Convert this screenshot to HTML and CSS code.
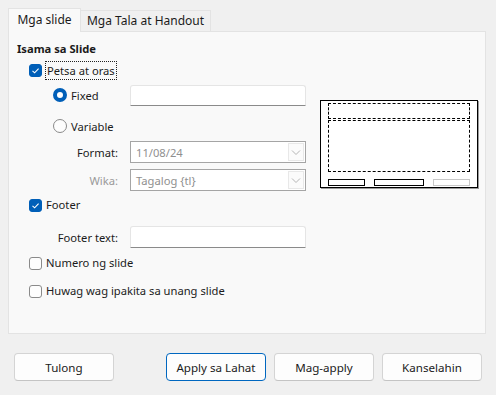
FILE: index.html
```html
<!DOCTYPE html>
<html>
<head>
<meta charset="utf-8">
<link rel="stylesheet" href="styles.css">
</head>
<body>
<div class="dialog">
  <div class="tabs">
    <div class="tab active">Mga slide</div>
    <div class="tab second">Mga Tala at Handout</div>
  </div>
  <div class="panel">
    <div class="heading">Isama sa Slide</div>
    <div class="cols">
      <div class="form">
        <div class="row check-row r-petsa">
          <span class="cb checked"><svg viewBox="0 0 13 13" width="13" height="13"><path d="M3.5 6.8 L5.6 8.8 L9.6 4.6" fill="none" stroke="#fff" stroke-width="1.1"/></svg></span>
          <span class="focus">Petsa at oras</span>
        </div>
        <div class="row field-row r-fixed">
          <span class="radio-label"><span class="rb checked"></span>Fixed</span>
          <span class="input"></span>
        </div>
        <div class="row r-variable">
          <span class="radio-label"><span class="rb"></span>Variable</span>
        </div>
        <div class="row field-row r-format">
          <span class="flabel">Format:</span>
          <span class="input select"><span class="val">11/08/24</span><span class="arrow"><svg viewBox="0 0 16 20" width="16" height="20"><path d="M4 8.5 L8 12.5 L12 8.5" fill="none" stroke="#b5b5b5" stroke-width="1"/></svg></span></span>
        </div>
        <div class="row field-row r-wika">
          <span class="flabel disabled">Wika:</span>
          <span class="input select"><span class="val">Tagalog {tl}</span><span class="arrow"><svg viewBox="0 0 16 20" width="16" height="20"><path d="M4 8.5 L8 12.5 L12 8.5" fill="none" stroke="#b5b5b5" stroke-width="1"/></svg></span></span>
        </div>
        <div class="row check-row r-footer">
          <span class="cb checked"><svg viewBox="0 0 13 13" width="13" height="13"><path d="M3.5 6.8 L5.6 8.8 L9.6 4.6" fill="none" stroke="#fff" stroke-width="1.1"/></svg></span>
          <span class="lbl">Footer</span>
        </div>
        <div class="row field-row r-ftext">
          <span class="flabel">Footer text:</span>
          <span class="input"></span>
        </div>
        <div class="row check-row r-numero">
          <span class="cb"></span>
          <span class="lbl">Numero ng slide</span>
        </div>
        <div class="row check-row r-huwag">
          <span class="cb"></span>
          <span class="lbl">Huwag wag ipakita sa unang slide</span>
        </div>
      </div>
      <div class="preview">
        <div class="pv-title"></div>
        <div class="pv-body"></div>
        <div class="pv-footer">
          <span class="pv-box pv-a"></span>
          <span class="pv-box pv-b"></span>
          <span class="pv-box pv-c"></span>
        </div>
      </div>
    </div>
  </div>
  <div class="buttons">
    <button class="btn">Tulong</button>
    <div class="right-btns">
      <button class="btn default">Apply sa Lahat</button>
      <button class="btn">Mag-apply</button>
      <button class="btn">Kanselahin</button>
    </div>
  </div>
</div>
</body>
</html>
```
FILE: styles.css
```css
html, body {
  margin: 0;
  padding: 0;
}
body {
  width: 496px;
  height: 395px;
  background: #f0f0f0;
  font-family: "Noto Sans", "Open Sans", sans-serif;
  font-size: 11.2px;
  color: #1b1b1b;
  overflow: hidden;
}
.dialog {
  padding: 8px 10px 0 8px;
}
.tabs {
  display: flex;
  align-items: flex-end;
  height: 23px;
  position: relative;
  z-index: 1;
}
.tab {
  white-space: nowrap;
  box-sizing: border-box;
  border: 1px solid #e3e3e3;
  border-bottom: none;
  text-align: center;
}
.tab.active {
  width: 73px;
  height: 24px;
  margin-bottom: -1px;
  background: #f9f9f9;
  line-height: 22px;
  font-size: 12px;
}
.tab.second {
  width: 131px;
  height: 21px;
  margin-left: -1px;
  background: #f0f0f0;
  line-height: 20px;
  font-size: 12px;
}
.panel {
  box-sizing: border-box;
  width: 478px;
  height: 303px;
  background: #f9f9f9;
  border: 1px solid #e3e3e3;
  padding: 9px 8px 0 8px;
}
.heading {
  font-weight: bold;
  height: 16px;
  line-height: 16px;
}
.cols {
  display: grid;
  grid-template-columns: 289px 158px;
  column-gap: 14px;
  align-items: start;
}
.row {
  display: flex;
  align-items: center;
  white-space: nowrap;
}
.check-row {
  height: 18px;
  padding-left: 12px;
}
.field-row {
  height: 22px;
}
.r-petsa { margin-top: 4px; }
.r-fixed { margin-top: 5px; }
.r-variable { margin-top: 11px; height: 18px; }
.r-format { margin-top: 6px; }
.r-wika { margin-top: 6px; }
.r-footer { margin-top: 5px; }
.r-ftext { margin-top: 12px; }
.r-numero { margin-top: 6px; }
.r-huwag { margin-top: 10px; }

.cb {
  width: 13px;
  height: 13px;
  box-sizing: border-box;
  border: 1px solid #8a8a8a;
  border-radius: 3px;
  background: #fdfdfd;
  margin-right: 4px;
  flex: none;
  display: flex;
}
.cb.checked {
  background: #005fb8;
  border-color: #005fb8;
}
.cb svg { margin: -1px; }
.focus {
  outline: 1px dotted #222;
  padding: 0 1px;
  line-height: 17px;
}
.lbl { line-height: 18px; }

.radio-label {
  display: flex;
  align-items: center;
  box-sizing: border-box;
  width: 113px;
  padding-left: 36px;
}
.rb {
  width: 14px;
  height: 14px;
  box-sizing: border-box;
  border-radius: 50%;
  border: 1px solid #8a8a8a;
  background: #fdfdfd;
  margin-right: 4px;
  flex: none;
}
.rb.checked {
  border: 4px solid #005fb8;
  background: #fff;
}
.flabel {
  width: 101px;
  text-align: right;
  margin-right: 12px;
}
.flabel.disabled { color: #9a9a9a; }
.input {
  box-sizing: border-box;
  width: 176px;
  height: 22px;
  background: #fff;
  border: 1px solid #e5e5e5;
  border-bottom-color: #8a8a8a;
  border-radius: 3px 3px 0 0;
}
.r-fixed .input { height: 21px; }
.select {
  display: flex;
  align-items: center;
  border: 1px solid #a5a5a5;
  border-radius: 0;
  padding: 0 1px 0 5px;
  color: #8f8f8f;
}
.select .val { flex: 1; }
.select .arrow {
  width: 16px;
  height: 18px;
  box-sizing: border-box;
  border: 1px solid #e8e8e8;
  background: #fbfbfb;
  display: flex;
  align-items: center;
  justify-content: center;
  overflow: hidden;
}
.select .arrow svg { flex: none; }

.preview {
  margin-top: 43px;
  width: 158px;
  height: 88px;
  box-sizing: border-box;
  background: #fff;
  border: 1px solid #000;
  box-shadow: 1px 1px 0 #9a9a9a;
  padding: 2px 7px 0 7px;
  display: flex;
  flex-direction: column;
}
.pv-title {
  height: 16px;
  box-sizing: border-box;
  border: 1px dashed #000;
}
.pv-body {
  height: 52px;
  margin-top: 1px;
  box-sizing: border-box;
  border: 1px dashed #000;
}
.pv-footer {
  display: flex;
  margin-top: 7px;
  justify-content: space-between;
}
.pv-box {
  height: 7px;
  box-sizing: border-box;
  border: 1px solid #000;
}
.pv-a { width: 37px; }
.pv-b { width: 50px; }
.pv-c { width: 37px; border-color: #c8c8c8; }

.buttons {
  display: flex;
  justify-content: space-between;
  margin-top: 19px;
  padding: 0 4px 0 6px;
}
.right-btns {
  display: flex;
  gap: 8px;
}
.btn {
  width: 100px;
  height: 28px;
  box-sizing: border-box;
  background: #fdfdfd;
  border: 1px solid #d4d4d4;
  border-bottom-color: #c4c4c4;
  border-radius: 4px;
  font-family: inherit;
  font-size: 11.6px;
  color: #1b1b1b;
  padding: 0;
}
.btn.default {
  border-color: #0067c0;
}
```
